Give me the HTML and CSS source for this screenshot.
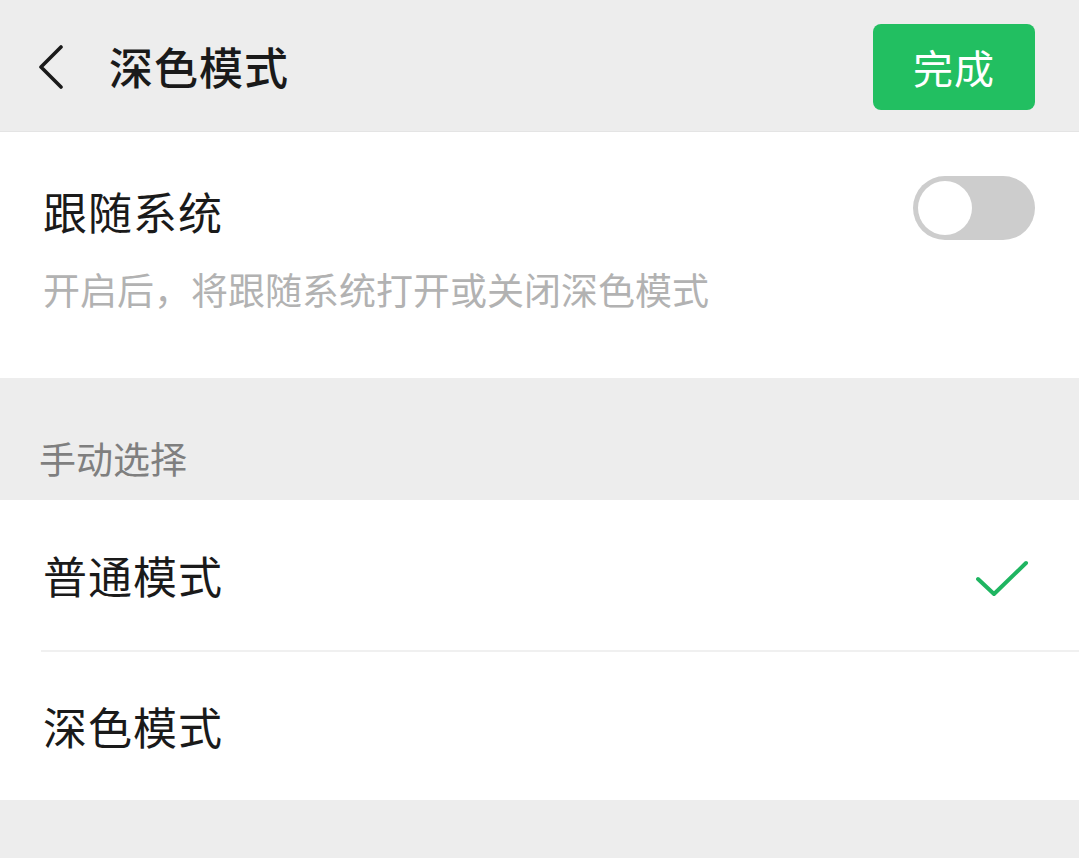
FILE: index.html
```html
<!DOCTYPE html>
<html lang="zh-CN">
<head>
    <meta charset="UTF-8">
    <meta name="viewport" content="width=device-width, initial-scale=1.0">
    <title>深色模式</title>
    <link rel="stylesheet" href="styles.css">
</head>
<body>
    <div class="header">
        <div class="header-left">
            <svg class="back" width="26" height="44" viewBox="0 0 26 44">
                <polyline points="23,2 3,22 23,42" fill="none" stroke="#1a1a1a" stroke-width="3.6" stroke-linecap="round" stroke-linejoin="round"/>
            </svg>
            <h1>深色模式</h1>
        </div>
        <button class="done">完成</button>
    </div>

    <div class="section follow">
        <div class="row-top">
            <span class="label">跟随系统</span>
            <div class="switch"><div class="knob"></div></div>
        </div>
        <p class="hint">开启后，将跟随系统打开或关闭深色模式</p>
    </div>

    <div class="group-title">手动选择</div>

    <ul class="options">
        <li>
            <span class="label">普通模式</span>
            <svg class="check" width="54" height="38" viewBox="0 0 54 38">
                <polyline points="3,19 19,34 51,3" fill="none" stroke="#1fb561" stroke-width="4" stroke-linecap="round" stroke-linejoin="round"/>
            </svg>
        </li>
        <li>
            <span class="label">深色模式</span>
        </li>
    </ul>
</body>
</html>
```

FILE: styles.css
```css
body {
    margin: 0;
    background-color: #ededed;
    font-family: "Noto Sans CJK SC", "Noto Sans", sans-serif;
    color: #1a1a1a;
}
.header {
    height: 131px;
    display: flex;
    align-items: center;
    justify-content: space-between;
    padding: 0 44px 0 38px;
    border-bottom: 1px solid #e4e4e4;
}
.header-left {
    display: flex;
    align-items: center;
}
.back {
    margin-top: 2px;
}
h1 {
    margin: 0 0 0 45px;
    font-size: 44px;
    font-weight: 500;
    letter-spacing: 1px;
}
.done {
    width: 162px;
    height: 86px;
    margin-top: 2px;
    background-color: #22bf61;
    color: white;
    border: none;
    border-radius: 8px;
    font-family: inherit;
    font-size: 40px;
    letter-spacing: 1px;
}
.section {
    background: white;
}
.follow {
    height: 246px;
    padding: 0 44px 0 43px;
    box-sizing: border-box;
}
.row-top {
    height: 158px;
    display: flex;
    align-items: center;
    justify-content: space-between;
}
.label {
    font-size: 44px;
    letter-spacing: 1px;
}
.switch {
    width: 122px;
    height: 64px;
    border-radius: 32px;
    background-color: #cdcdcd;
    display: flex;
    align-items: center;
    padding: 0 5px;
    box-sizing: border-box;
    margin-top: -6px;
}
.knob {
    width: 54px;
    height: 54px;
    border-radius: 50%;
    background: white;
}
.hint {
    margin: -28px 0 0;
    font-size: 37px;
    color: #b2b2b2;
}
.group-title {
    height: 122px;
    box-sizing: border-box;
    padding: 58px 0 0 39px;
    font-size: 37px;
    line-height: 44px;
    color: #7f7f7f;
}
.options {
    list-style: none;
    margin: 0;
    padding: 0 0 0 41px;
    background: white;
}
.options li {
    height: 150px;
    display: flex;
    align-items: center;
    justify-content: space-between;
    padding: 0 50px 0 2px;
    border-bottom: 2px solid #f0f0f0;
}
.options li:last-child {
    height: 148px;
    border-bottom: none;
}
.check {
    margin-top: 8px;
}
```
